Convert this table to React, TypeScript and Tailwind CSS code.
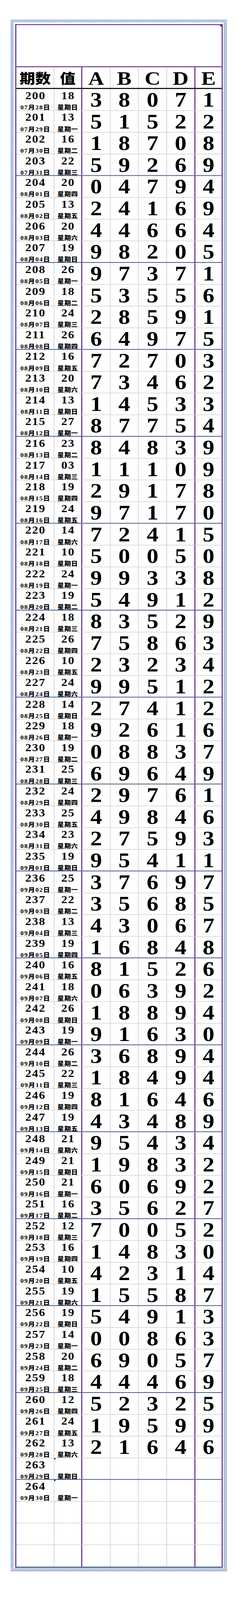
import type { ReactElement } from "react";
import { useLayoutEffect, useState } from "react";

// A B C D E per period, starting at 200
const DRAWS = [
  "38071", "51522", "18708", "59269", "04794", "24169", "44664", "98205",
  "97371", "53556", "28591", "64975", "72703", "73462", "14533", "87754",
  "84839", "11109", "29178", "97170", "72415", "50050", "99338", "54912",
  "83529", "75863", "23234", "99512", "27412", "92616", "08837", "69649",
  "29761", "49846", "27593", "95411", "37697", "35685", "43067", "16848",
  "81526", "06392", "18894", "91630", "36894", "18494", "81646", "43489",
  "95434", "19832", "60692", "35627", "70052", "14830", "42314", "15587",
  "54913", "00863", "69057", "44469", "52325", "19599", "21646",
];

const WEEK = ["日", "一", "二", "三", "四", "五", "六"];
const TOTAL_ROWS = 68;
const LAST_PERIOD_OFFSET = 64;
const PAGE_HEIGHT = 4712;

type Row = {
  period?: string;
  date?: string;
  weekday?: string;
  value?: string;
  digits?: string[];
  flagged?: boolean;
};

function pad(n: number): string {
  return n < 10 ? `0${n}` : `${n}`;
}

function dateFor(i: number): string {
  const d = 28 + i;
  if (d <= 31) return `07月${pad(d)}日`;
  if (d <= 62) return `08月${pad(d - 31)}日`;
  return `09月${pad(d - 62)}日`;
}

function buildRows(): Row[] {
  const rows: Row[] = [];
  for (let i = 0; i < TOTAL_ROWS; i++) {
    if (i > LAST_PERIOD_OFFSET) {
      rows.push({});
      continue;
    }
    const draw = DRAWS[i];
    const digits = draw ? draw.split("") : undefined;
    const value = digits
      ? pad(digits.slice(0, 4).reduce((s, d) => s + Number(d), 0))
      : undefined;
    rows.push({
      period: `${200 + i}`,
      date: dateFor(i),
      weekday: `星期${WEEK[i % 7]}`,
      value,
      digits,
      flagged: !draw,
    });
  }
  return rows;
}

const CELL_BORDERS = [
  "w-[97px] border-r border-[#b3b3b3]",
  "w-[72px] border-r-[3px] border-[#70409c]",
  "w-[72px] border-r border-[#b3b3b3]",
  "w-[72px] border-r border-[#b3b3b3]",
  "w-[73px] border-r border-[#b3b3b3]",
  "w-[73px] border-r-[3px] border-[#70409c]",
  "w-[67px]",
];

function BandH({ id, h }: { id: string; h: number }): ReactElement {
  return (
    <svg width="100%" height={h} className="block">
      <defs>
        <pattern id={id} width="8" height={h} patternUnits="userSpaceOnUse">
          <rect width="8" height={h} fill="#d0ddef" />
          <path
            d={`M0 ${h - 1.5}H7.2V1.5H2.3V${h - 3.5}H5`}
            stroke="#8ea8d1"
            strokeWidth="1.2"
            fill="none"
          />
        </pattern>
      </defs>
      <rect width="100%" height="100%" fill={`url(#${id})`} />
    </svg>
  );
}

function BandV({ id, w }: { id: string; w: number }): ReactElement {
  return (
    <svg width={w} height="100%" className="block h-full">
      <defs>
        <pattern id={id} width={w} height="8" patternUnits="userSpaceOnUse">
          <rect width={w} height="8" fill="#d0ddef" />
          <path
            d={`M1.5 0V7.2H${w - 1.5}V2.3H3.5V5`}
            stroke="#8ea8d1"
            strokeWidth="1.2"
            fill="none"
          />
        </pattern>
      </defs>
      <rect width="100%" height="100%" fill={`url(#${id})`} />
    </svg>
  );
}

function DataRow({ row, index }: { row: Row; index: number }): ReactElement {
  const isLast = index === TOTAL_ROWS - 1;
  const groupEnd = index % 4 === 3;
  const rowBorder = isLast
    ? ""
    : groupEnd
      ? "border-b-2 border-[#2f4878]"
      : "border-b border-[#b3b3b3]";

  return (
    <div className={`flex h-16 overflow-hidden ${rowBorder}`}>
      {/* 期数 + 日期 */}
      <div className={`${CELL_BORDERS[0]} shrink-0 flex flex-col items-center`}>
        {row.period && (
          <>
            <div className="pt-[9px] text-[31px] leading-[22px] font-bold tracking-[2px] pl-[2px] whitespace-nowrap">
              {row.period}
            </div>
            <div className="mt-[16px] text-[17px] leading-[16px] font-black tracking-[1.5px] pl-[1.5px] whitespace-nowrap">
              {row.date}
            </div>
          </>
        )}
      </div>

      {/* 值 + 星期 */}
      <div className={`${CELL_BORDERS[1]} shrink-0 relative flex flex-col items-center`}>
        {row.flagged && (
          <span className="absolute left-0 top-0 h-0 w-0 border-t-[5px] border-r-[5px] border-t-black border-r-transparent" />
        )}
        {row.period && (
          <>
            <div className="pt-[9px] text-[31px] leading-[22px] font-bold tracking-[2px] pl-[2px] whitespace-nowrap">
              {row.value ?? "\u00a0"}
            </div>
            <div className="mt-[16px] text-[17px] leading-[16px] font-black tracking-[0.5px] whitespace-nowrap">
              {row.weekday}
            </div>
          </>
        )}
      </div>

      {/* A - E */}
      {[0, 1, 2, 3, 4].map((k) => (
        <div
          key={k}
          className={`${CELL_BORDERS[k + 2]} shrink-0 flex items-center justify-center pt-[1px] text-[60px] leading-[60px] font-bold`}
        >
          {row.digits?.[k] ?? ""}
        </div>
      ))}
    </div>
  );
}

export default function App(): ReactElement {
  const rows = buildRows();
  // the window can be shorter than the sheet; squeeze it vertically so the whole sheet shows
  const [scale, setScale] = useState(1);

  useLayoutEffect(() => {
    const fit = () => setScale(Math.min(1, window.innerHeight / PAGE_HEIGHT));
    fit();
    window.addEventListener("resize", fit);
    return () => window.removeEventListener("resize", fit);
  }, []);

  return (
    <div className="overflow-hidden bg-white" style={{ height: PAGE_HEIGHT * scale }}>
      <div
        className="h-[4712px] origin-top text-black font-['Liberation_Serif','Noto_Sans_CJK_SC',serif]"
        style={{ transform: `scaleY(${scale})` }}
      >
        <div className="h-[57px]" />
        <div className="ml-[27px] w-[555px]">
          <BandH id="gk-top" h={9} />
          <div className="flex">
            <div className="w-[8px] shrink-0">
              <BandV id="gk-left" w={8} />
            </div>

            <div className="pl-[4px] pr-[2px] pt-[5px] pb-[1px]">
              <div className="w-[532px] border-[3px] border-[#70409c] border-b-[#2f4878]">
                {/* 标题区（空白） */}
                <div className="h-[124px] flex justify-end items-start border-b-[3px] border-[#70409c]">
                  <span className="h-0 w-0 border-t-[5px] border-l-[5px] border-t-black border-l-transparent" />
                </div>

                {/* 表头 */}
                <div className="flex h-16 border-b-[3px] border-black">
                  <div className={`${CELL_BORDERS[0]} shrink-0 flex items-center justify-center`}>
                    <span className="font-['Noto_Sans_CJK_SC',sans-serif] font-black text-[40px] leading-[40px]">
                      期数
                    </span>
                  </div>
                  <div className={`${CELL_BORDERS[1]} shrink-0 flex items-center justify-center`}>
                    <span className="font-['Noto_Sans_CJK_SC',sans-serif] font-black text-[40px] leading-[40px]">
                      值
                    </span>
                  </div>
                  {["A", "B", "C", "D", "E"].map((l, k) => (
                    <div
                      key={l}
                      className={`${CELL_BORDERS[k + 2]} shrink-0 flex items-center justify-center pt-[5px] text-[56px] leading-[56px] font-bold`}
                    >
                      {l}
                    </div>
                  ))}
                </div>

                {/* 数据行 */}
                {rows.map((row, i) => (
                  <DataRow key={i} row={row} index={i} />
                ))}
              </div>
            </div>

            <div className="w-[9px] shrink-0">
              <BandV id="gk-right" w={9} />
            </div>
          </div>
          <BandH id="gk-bottom" h={10} />
        </div>
      </div>
    </div>
  );
}
